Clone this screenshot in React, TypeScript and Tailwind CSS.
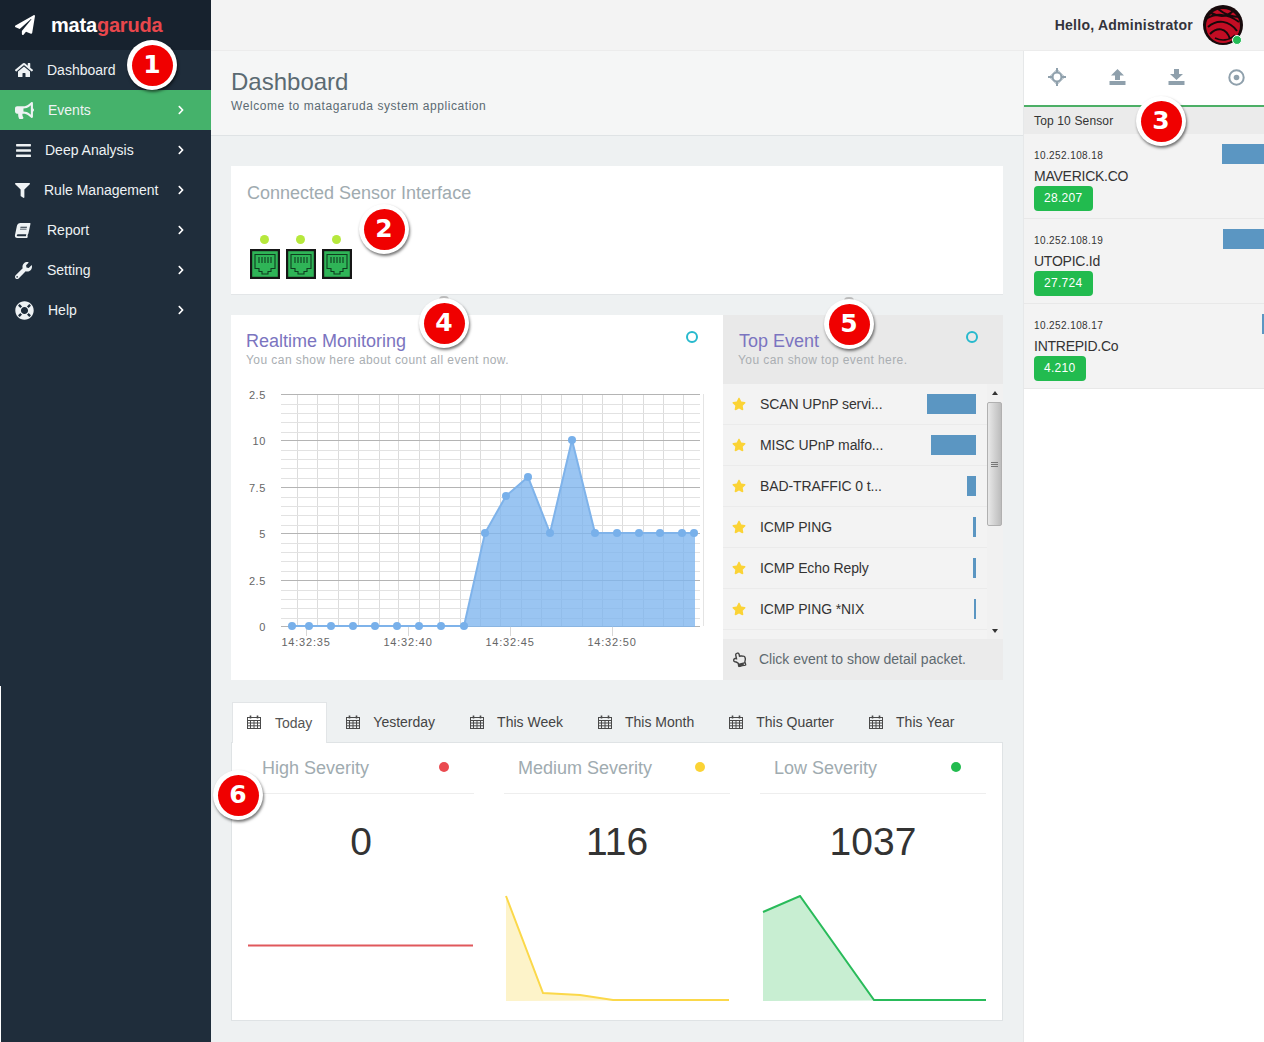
import React from "react";
import {
  FaPaperPlane,
  FaHome,
  FaBullhorn,
  FaBars,
  FaFilter,
  FaBook,
  FaWrench,
  FaLifeRing,
  FaChevronRight,
  FaStar,
  FaRegHandPointUp,
} from "react-icons/fa";

const navItems = [
  { label: "Dashboard", icon: <FaHome size={18} />, labelClass: "ml-[12px]", arrow: false },
  { label: "Events", icon: <FaBullhorn size={19} />, labelClass: "ml-[13px]", arrow: true, active: true },
  { label: "Deep Analysis", icon: <FaBars size={17} />, labelClass: "ml-[10px]", arrow: true },
  { label: "Rule Management", icon: <FaFilter size={15} />, labelClass: "ml-[9px]", arrow: true },
  { label: "Report", icon: <FaBook size={15} className="-skew-x-12" />, labelClass: "ml-[12px]", arrow: true },
  { label: "Setting", icon: <FaWrench size={17} />, labelClass: "ml-[12px]", arrow: true },
  { label: "Help", icon: <FaLifeRing size={19} />, labelClass: "ml-[13px]", arrow: true },
];

const sensors = [
  { ip: "10.252.108.18", name: "MAVERICK.CO", count: "28.207", bar: 42 },
  { ip: "10.252.108.19", name: "UTOPIC.Id", count: "27.724", bar: 41 },
  { ip: "10.252.108.17", name: "INTREPID.Co", count: "4.210", bar: 2 },
];

const events = [
  { name: "SCAN UPnP servi...", bar: 49 },
  { name: "MISC UPnP malfo...", bar: 45 },
  { name: "BAD-TRAFFIC 0 t...", bar: 9 },
  { name: "ICMP PING", bar: 3 },
  { name: "ICMP Echo Reply", bar: 3 },
  { name: "ICMP PING *NIX", bar: 2 },
];

const tabs = ["Today", "Yesterday", "This Week", "This Month", "This Quarter", "This Year"];

const points: [number, number][] = [
  [292, 626], [309, 626], [331, 626], [353, 626], [375, 626], [397, 626], [419, 626], [441, 626], [464, 626],
  [485, 533], [506, 496], [528, 477], [550, 533], [572, 440], [595, 533], [617, 533], [639, 533], [660, 533],
  [682, 533], [694, 533],
];

const verticals = [297, 317, 338, 358, 379, 398, 419, 439, 460, 480, 500, 521, 541, 561, 582, 602, 622, 643, 663, 683];
const majors = [394.5, 440.5, 487.5, 533.5, 580.5, 626.5];
const minors = majors.slice(0, 5).flatMap((y) => [1, 2, 3, 4].map((i) => Math.round(y + i * 9.28) + 0.5));
const yLabels = ["2.5", "10", "7.5", "5", "2.5", "0"];
const xLabels: [number, string][] = [[306, "14:32:35"], [408, "14:32:40"], [510, "14:32:45"], [612, "14:32:50"]];

function Marker({ n, className }: { n: number; className: string }) {
  return (
    <div className={"absolute w-[50px] h-[50px] rounded-full bg-white flex items-center justify-center shadow-[1px_2px_3px_rgba(0,0,0,0.55)] " + className}>
      <div className="absolute -top-[2px] w-[10px] h-[4px] rounded-t-full bg-[#bdbdbd] -z-10" />
      <div className="w-[41px] h-[41px] rounded-full bg-[#f00000] text-white font-bold text-[25px] flex items-center justify-center [font-family:'DejaVu_Sans',sans-serif]">
        {n}
      </div>
    </div>
  );
}

function Ring() {
  return <div className="w-[12px] h-[12px] rounded-full border-2 border-[#27b9cd]" />;
}

function CalendarIcon() {
  return (
    <svg width="14" height="14" viewBox="0 0 14 14" className="text-[#4a4a4a] shrink-0 -mt-[2px]" fill="none" stroke="currentColor">
      <rect x="0.5" y="2.5" width="13" height="11" />
      <path d="M0.5 5.5H13.5M0.5 8H13.5M0.5 10.8H13.5M3.5 5.5V13.5M7 5.5V13.5M10.5 5.5V13.5" />
      <path d="M3.5 0.5V3.5M10.5 0.5V3.5" strokeWidth="1.6" />
    </svg>
  );
}

function PortIcon() {
  return (
    <svg width="30" height="30" viewBox="0 0 30 30">
      <rect x="1" y="1" width="28" height="28" fill="#2fb457" stroke="#161616" strokeWidth="2.4" />
      <path d="M5 5.5H25V19.5H21V22.5H18V25H12V22.5H9V19.5H5Z" fill="none" stroke="#0f3d1f" strokeWidth="1.1" />
      <path d="M9 8V14M12 8V14M15 8V14M18 8V14M21 8V14" stroke="#0f3d1f" strokeWidth="1.1" />
    </svg>
  );
}

function Avatar() {
  return (
    <div className="relative w-[40px] h-[40px]">
      <svg width="40" height="40" viewBox="0 0 40 40">
        <circle cx="20" cy="20" r="20" fill="#17090b" />
        <circle cx="20" cy="21" r="17" fill="#c30d24" />
        <path d="M3 14C12 8 24 8 36 17M5 22C14 14 26 15 34 26M8 8C16 12 24 12 30 6M7 29C14 22 23 22 27 34M15 4C20 8 28 12 37 12" stroke="#17090b" strokeWidth="2" fill="none" />
        <path d="M12 33C18 36 26 36 32 30" stroke="#17090b" strokeWidth="1.6" fill="none" />
      </svg>
      <div className="absolute left-[29px] top-[30px] w-[10px] h-[10px] rounded-full bg-[#22bb55] border border-white" />
    </div>
  );
}

function PanelTools() {
  return (
    <div className="h-[56px] flex items-center justify-between pl-[24px] pr-[19px] pb-[2px] bg-white border-b-2 border-[#4caf66] text-[#8fa0ac]">
      <svg width="18" height="18" viewBox="0 0 18 18" fill="currentColor">
        <path d="M8 0H10V5H8ZM8 13H10V18H8ZM0 8H5V10H0ZM13 8H18V10H13Z" />
        <path d="M9 1.5L16.5 9L9 16.5L1.5 9Z" fill="none" stroke="currentColor" strokeWidth="1" />
        <circle cx="9" cy="9" r="4.4" fill="none" stroke="currentColor" strokeWidth="2" />
      </svg>
      <svg width="17" height="16" viewBox="0 0 17 16" fill="currentColor">
        <path d="M8.5 0L15 6.5H11V11H6V6.5H2Z" />
        <path d="M0.5 12H16.5V16H0.5Z" />
      </svg>
      <svg width="17" height="16" viewBox="0 0 17 16" fill="currentColor">
        <path d="M6 0H11V5H15L8.5 11L2 5H6Z" />
        <path d="M0.5 12H16.5V16H0.5Z" />
      </svg>
      <svg width="17" height="17" viewBox="0 0 17 17">
        <circle cx="8.5" cy="8.5" r="7.2" fill="none" stroke="currentColor" strokeWidth="2" />
        <circle cx="8.5" cy="8.5" r="2.8" fill="currentColor" />
      </svg>
    </div>
  );
}

function RealtimeChart() {
  const line = points.map(([x, y]) => `${x},${y}`).join(" ");
  return (
    <svg width="492" height="295" viewBox="231 385 492 295" className="block">
      {verticals.map((x) => (
        <line key={x} x1={x + 0.5} x2={x + 0.5} y1="394" y2="626" stroke="#dcdcdc" />
      ))}
      <line x1="703.5" x2="703.5" y1="394" y2="626" stroke="#e4e4e4" />
      {minors.map((y) => (
        <line key={y} x1="281" x2="700" y1={y} y2={y} stroke="#e2e2e2" />
      ))}
      {majors.map((y) => (
        <line key={y} x1="281" x2="700" y1={y} y2={y} stroke="#b4b4b4" />
      ))}
      {xLabels.map(([x]) => (
        <line key={x} x1={x + 0.5} x2={x + 0.5} y1="626" y2="636" stroke="#d8d8d8" />
      ))}
      <polygon points={`${line} 695,533 695,627 292,627`} fill="#7db5ee" fillOpacity="0.78" />
      <polyline points={line} fill="none" stroke="#7fb3ea" strokeWidth="2" />
      {points.map(([x, y]) => (
        <circle key={x} cx={x} cy={y} r="4" fill="#78b0ea" />
      ))}
      {yLabels.map((label, i) => (
        <text key={i} x="266" y={majors[i] + 4} textAnchor="end" fontSize="11" letterSpacing="0.6" fill="#666">
          {label}
        </text>
      ))}
      {xLabels.map(([x, label]) => (
        <text key={x} x={x} y="646" textAnchor="middle" fontSize="11" letterSpacing="0.8" fill="#666">
          {label}
        </text>
      ))}
    </svg>
  );
}

function SeverityColumn({
  title,
  value,
  dot,
  children,
  viewBox,
}: {
  title: string;
  value: string;
  dot: string;
  children: React.ReactNode;
  viewBox: string;
}) {
  return (
    <div>
      <div className="h-[51px] flex items-center justify-between pl-[14px] pr-[25px] border-b border-[#eeeeee]">
        <span className="text-[18px] text-[#a0abb0]">{title}</span>
        <span className={"w-[10px] h-[10px] rounded-full -mt-[2px] " + dot} />
      </div>
      <div className="mt-[24px] h-[48px] leading-[48px] text-center text-[39px] text-[#333333]">{value}</div>
      <svg width="226" height="110" viewBox={viewBox} className="block mt-[29px]">
        {children}
      </svg>
    </div>
  );
}

export default function App() {
  return (
    <div className="relative isolate w-[1264px] h-[1042px] overflow-hidden flex text-[14px] text-[#333] bg-[#eef1f2] [font-family:'Liberation_Sans',Arial,sans-serif]">
      <aside className="w-[211px] shrink-0 flex flex-col bg-[#1f2d3b]">
        <div className="h-[50px] flex items-center pl-[15px] bg-[#17222e] text-white">
          <FaPaperPlane size={20} />
          <span className="ml-[16px] text-[20px] font-bold tracking-[-0.2px]">
            mata<span className="text-[#e8474c]">garuda</span>
          </span>
        </div>
        <nav className="h-[636px]">
          {navItems.map((item) => (
            <div
              key={item.label}
              className={
                "h-[40px] flex items-center pl-[15px] pr-[25px] text-[#eef2f4] " +
                (item.active ? "bg-[#45b26b]" : "")
              }
            >
              <span className="w-[20px] flex justify-start">{item.icon}</span>
              <span className={item.labelClass}>{item.label}</span>
              {item.arrow && <FaChevronRight size={10} className="ml-auto text-white" />}
            </div>
          ))}
        </nav>
        <div className="flex-1 border-l border-white" />
      </aside>

      <div className="flex-1 flex flex-col min-w-0">
        <header className="h-[51px] shrink-0 flex items-center justify-end pr-[21px] bg-[#f3f3f3] border-b border-[#ececec]">
          <span className="font-bold text-[#33333b] tracking-[0.25px]">Hello, Administrator</span>
          <div className="ml-[10px]">
            <Avatar />
          </div>
        </header>

        <div className="flex-1 flex min-h-0">
          <main className="w-[812px] shrink-0">
            <div className="h-[85px] pl-[20px] pt-[16px] bg-[#f5f6f6] border-b border-[#dfe3e5]">
              <h1 className="text-[24px] leading-[30px] text-[#5b6a72]">Dashboard</h1>
              <p className="text-[12px] leading-[16px] mt-[1px] tracking-[0.57px] text-[#5b6a72]">
                Welcome to matagaruda system application
              </p>
            </div>

            <div className="px-[20px] pt-[30px]">
              <section className="h-[129px] bg-white pl-[16px] pt-[15px] border-b border-[#e3e6e8]">
                <h2 className="text-[18px] leading-[24px] text-[#a0abb0]">Connected Sensor Interface</h2>
                <div className="mt-[30px] ml-[3px] flex gap-[6px]">
                  {[0, 1, 2].map((i) => (
                    <div key={i} className="w-[30px] flex flex-col items-center gap-[5px]">
                      <div className="w-[9px] h-[9px] rounded-full bg-[#b6e83c] -translate-x-px" />
                      <PortIcon />
                    </div>
                  ))}
                </div>
              </section>

              <section className="mt-[20px] h-[365px] flex">
                <div className="w-[492px] bg-white">
                  <div className="h-[70px] relative pl-[15px] pt-[15px]">
                    <h2 className="text-[18px] leading-[22px] text-[#7b74c0]">Realtime Monitoring</h2>
                    <p className="text-[12px] leading-[16px] tracking-[0.44px] text-[#a9aeb2]">You can show here about count all event now.</p>
                    <div className="absolute right-[25px] top-[16px]">
                      <Ring />
                    </div>
                  </div>
                  <RealtimeChart />
                </div>

                <div className="w-[280px] flex flex-col">
                  <div className="h-[69px] relative bg-[#e9e9e9] pl-[15px] pt-[15px]">
                    <h2 className="text-[18px] leading-[22px] ml-px text-[#7b74c0]">Top Event</h2>
                    <p className="text-[12px] leading-[16px] tracking-[0.42px] text-[#a9aeb2]">You can show top event here.</p>
                    <div className="absolute right-[25px] top-[16px]">
                      <Ring />
                    </div>
                  </div>
                  <div className="h-[255px] flex bg-[#f3f3f3]">
                    <div className="w-[264px]">
                      {events.map((ev) => (
                        <div key={ev.name} className="h-[41px] flex items-center pl-[9px] pr-[11px] border-b border-[#ebebeb]">
                          <FaStar size={14} className="text-[#fbd335] shrink-0" />
                          <span className="ml-[14px] flex-1 tracking-[-0.1px]">{ev.name}</span>
                          <div className="h-[20px] bg-[#5b96c2]" style={{ width: ev.bar }} />
                        </div>
                      ))}
                    </div>
                    <div className="w-[16px] flex flex-col items-start bg-[#f1f1f1]">
                      <div className="h-[18px] w-[15px] flex items-center justify-center">
                        <div className="-mt-[1px] border-x-[3px] border-b-[4px] border-x-transparent border-b-[#333]" />
                      </div>
                      <div className="w-[15px] h-[124px] flex flex-col items-center justify-center gap-[1px] rounded-[2px] border border-[#b0b0b0] bg-gradient-to-r from-[#e8e8e8] to-[#bcbcbc]">
                        <div className="w-[7px] h-px bg-[#777]" />
                        <div className="w-[7px] h-px bg-[#777]" />
                        <div className="w-[7px] h-px bg-[#777]" />
                      </div>
                      <div className="mt-auto h-[18px] w-[15px] flex items-center justify-center">
                        <div className="mt-[2px] border-x-[3px] border-t-[4px] border-x-transparent border-t-[#333]" />
                      </div>
                    </div>
                  </div>
                  <div className="flex-1 flex items-center pl-[9px] bg-[#ebebeb] text-[#5f6a70]">
                    <FaRegHandPointUp size={15} className="-rotate-12 text-[#444]" />
                    <span className="ml-[12px]">Click event to show detail packet.</span>
                  </div>
                </div>
              </section>

              <div className="mt-[22px] h-[40px] pl-px flex gap-[5px] relative z-10">
                {tabs.map((tab, i) => (
                  <div
                    key={tab}
                    className={
                      "h-[41px] flex items-center " +
                      (i === 0
                        ? "pl-[14px] pr-[14px] -mr-px gap-[14px] bg-white border-x border-t border-[#e2e5e7] text-[#555]"
                        : "px-[15px] gap-[13px] text-[#444]")
                    }
                  >
                    <CalendarIcon />
                    <span>{tab}</span>
                  </div>
                ))}
              </div>

              <section className="h-[279px] bg-white border border-[#dfe3e5] px-[16px] grid grid-cols-3 gap-[30px]">
                <SeverityColumn title="High Severity" value="0" dot="bg-[#ea4a50]" viewBox="248 895 226 110">
                  <line x1="248" x2="473" y1="945.5" y2="945.5" stroke="#e0585c" strokeWidth="2" />
                </SeverityColumn>
                <SeverityColumn title="Medium Severity" value="116" dot="bg-[#fbd335]" viewBox="504 895 226 110">
                  <polygon points="506,896 543,993 580,995 613,1000 729,1000 506,1001" fill="#fdf3c9" />
                  <polyline points="506,896 543,993 580,995 613,1000 729,1000" fill="none" stroke="#fbd84a" strokeWidth="2" />
                </SeverityColumn>
                <SeverityColumn title="Low Severity" value="1037" dot="bg-[#22bb4f]" viewBox="760 895 226 110">
                  <polygon points="763,912 800,896 874,1000 987,1000 763,1001" fill="#c8eed2" />
                  <polyline points="763,912 800,896 874,1000 987,1000" fill="none" stroke="#29bb5a" strokeWidth="2" />
                </SeverityColumn>
              </section>
            </div>
          </main>

          <aside className="flex-1 min-w-0 flex flex-col bg-white border-l border-[#e6e8e9]">
            <PanelTools />
            <div className="h-[27px] shrink-0 flex items-center pl-[10px] bg-[#ebebeb] text-[12px] tracking-[0.15px]">Top 10 Sensor</div>
            {sensors.map((s) => (
              <div key={s.ip} className="h-[85px] relative pl-[10px] pt-[15px] bg-[#f3f3f3] border-b border-[#e8e8e8]">
                <div className="text-[10px] leading-[14px] tracking-[0.4px]">{s.ip}</div>
                <div className="mt-[4px] text-[14px] leading-[18px] tracking-[-0.25px]">{s.name}</div>
                <div className="mt-[1px] w-fit px-[10px] h-[25px] leading-[25px] rounded-[4px] bg-[#22bb4f] text-white text-[12px] tracking-[0.3px]">
                  {s.count}
                </div>
                <div className="absolute right-0 top-[10px] h-[20px] bg-[#5b96c2]" style={{ width: s.bar }} />
              </div>
            ))}
          </aside>
        </div>
      </div>

      <Marker n={1} className="left-[127px] top-[40px]" />
      <Marker n={2} className="left-[359px] top-[204px]" />
      <Marker n={3} className="left-[1136px] top-[96px]" />
      <Marker n={4} className="left-[419px] top-[298px]" />
      <Marker n={5} className="left-[824px] top-[299px]" />
      <Marker n={6} className="left-[213px] top-[770px]" />
    </div>
  );
}
